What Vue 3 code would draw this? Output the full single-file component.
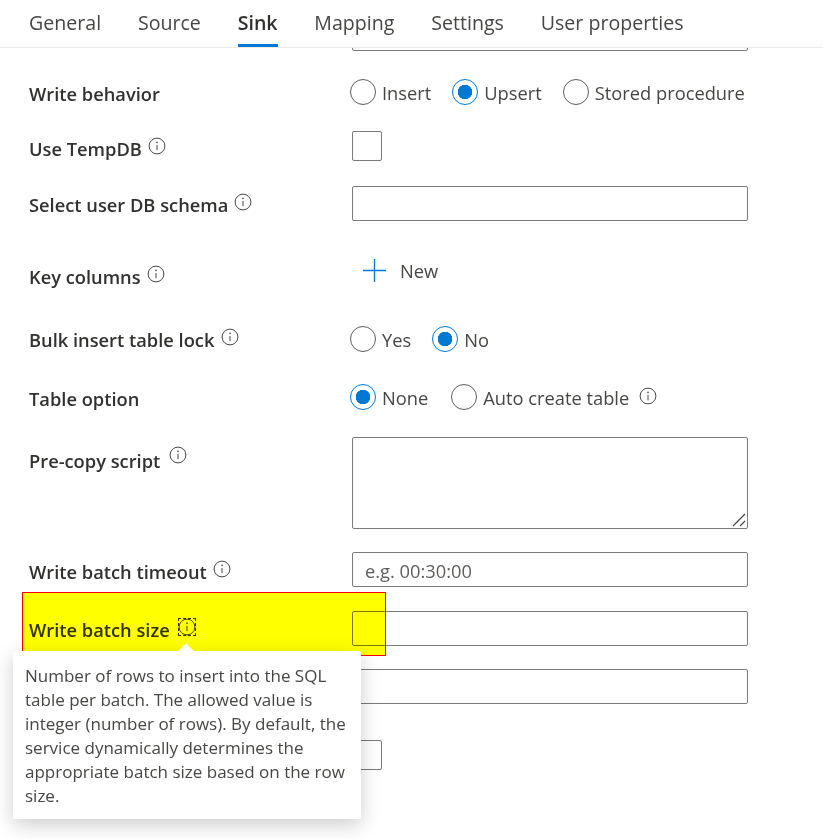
<template>
  <div class="page">
    <nav class="tabs">
      <a v-for="tab in tabs" :key="tab" class="tab" :class="{ 'tab--active': tab === 'Sink' }">{{ tab }}</a>
    </nav>

    <div class="form">
      <div class="clipped-field"><input class="text-input" type="text"></div>

      <div class="row row-behavior">
        <div class="label label-behavior">Write behavior</div>
        <div class="radios">
          <label v-for="o in behaviorOptions" :key="o" class="radio">
            <input v-model="behavior" type="radio" name="behavior" :value="o"><span>{{ o }}</span>
          </label>
        </div>
      </div>

      <div class="row row-tempdb">
        <div class="label label-tempdb">Use TempDB <svg class="info" viewBox="0 0 18 18"><circle cx="9" cy="9" r="7.9" /><path d="M9 8v5.2" /><circle class="dot" cx="9" cy="5.4" r=".8" /></svg></div>
        <input class="checkbox" type="checkbox">
      </div>

      <div class="row row-schema">
        <div class="label label-schema">Select user DB schema <svg class="info" viewBox="0 0 18 18"><circle cx="9" cy="9" r="7.9" /><path d="M9 8v5.2" /><circle class="dot" cx="9" cy="5.4" r=".8" /></svg></div>
        <input class="text-input" type="text">
      </div>

      <div class="row row-key">
        <div class="label label-key">Key columns <svg class="info" viewBox="0 0 18 18"><circle cx="9" cy="9" r="7.9" /><path d="M9 8v5.2" /><circle class="dot" cx="9" cy="5.4" r=".8" /></svg></div>
        <button class="add-btn" type="button">
          <svg class="plus" viewBox="0 0 24 24"><path d="M12 0v24M0 12h24" /></svg>
          New
        </button>
      </div>

      <div class="row row-bulk">
        <div class="label label-bulk">Bulk insert table lock <svg class="info" viewBox="0 0 18 18"><circle cx="9" cy="9" r="7.9" /><path d="M9 8v5.2" /><circle class="dot" cx="9" cy="5.4" r=".8" /></svg></div>
        <div class="radios">
          <label v-for="o in ['Yes', 'No']" :key="o" class="radio">
            <input v-model="bulkLock" type="radio" name="bulk" :value="o"><span>{{ o }}</span>
          </label>
        </div>
      </div>

      <div class="row row-table">
        <div class="label label-table">Table option</div>
        <div class="radios radios--table">
          <label class="radio"><input v-model="tableOption" type="radio" name="table" value="None"><span>None</span></label>
          <label class="radio"><input v-model="tableOption" type="radio" name="table" value="Auto"><span>Auto create table</span></label>
          <svg class="info info--after" viewBox="0 0 18 18"><circle cx="9" cy="9" r="7.9" /><path d="M9 8v5.2" /><circle class="dot" cx="9" cy="5.4" r=".8" /></svg>
        </div>
      </div>

      <div class="row row-script">
        <div class="label label-script">Pre-copy script <svg class="info" viewBox="0 0 18 18"><circle cx="9" cy="9" r="7.9" /><path d="M9 8v5.2" /><circle class="dot" cx="9" cy="5.4" r=".8" /></svg></div>
        <div class="textarea-wrap">
          <textarea class="textarea"></textarea>
          <svg class="grip" viewBox="0 0 14 14"><path d="M1 13 13 1M8 13l5-5" /></svg>
        </div>
      </div>

      <div class="row row-timeout">
        <div class="label label-timeout">Write batch timeout <svg class="info" viewBox="0 0 18 18"><circle cx="9" cy="9" r="7.9" /><path d="M9 8v5.2" /><circle class="dot" cx="9" cy="5.4" r=".8" /></svg></div>
        <input class="text-input" type="text" placeholder="e.g. 00:30:00">
      </div>

      <div class="row row-size">
        <div class="label label-size">Write batch size <span class="focus-ring"><svg class="info" viewBox="0 0 18 18"><circle cx="9" cy="9" r="7.9" /><path d="M9 8v5.2" /><circle class="dot" cx="9" cy="5.4" r=".8" /></svg></span></div>
        <input class="text-input" type="text">
      </div>

      <div class="row row-next">
        <div class="label"></div>
        <input class="text-input" type="text">
      </div>

      <div class="row row-last">
        <div class="label"></div>
        <input class="checkbox" type="checkbox">
      </div>
    </div>

    <div class="highlight"></div>

    <div class="tooltip">
      <span class="tooltip__arrow"></span>
      Number of rows to insert into the SQL table per batch. The allowed value is integer (number of rows). By default, the service dynamically determines the appropriate batch size based on the row size.
    </div>
  </div>
</template>

<script setup>
import { ref } from 'vue'

const tabs = ['General', 'Source', 'Sink', 'Mapping', 'Settings', 'User properties']
const behaviorOptions = ['Insert', 'Upsert', 'Stored procedure']

const behavior = ref('Upsert')
const bulkLock = ref('No')
const tableOption = ref('None')
</script>

<style>
html, body {
  margin: 0;
  background: #fff;
}
</style>

<style scoped>
.page {
  position: relative;
  width: 823px;
  height: 839px;
  overflow: hidden;
  font-family: "Open Sans", "Noto Sans", sans-serif;
  color: #323130;
  font-size: 18.3px;
}

.tabs {
  display: flex;
  gap: 36.8px;
  height: 47px;
  padding-left: 29px;
  border-bottom: 1px solid #edebe9;
  font-size: 19.6px;
}

.tab {
  height: 47px;
  line-height: 46px;
  box-sizing: border-box;
  color: #484644;
}

.tab--active {
  font-weight: 600;
  color: #323130;
  border-bottom: 3px solid #0078d4;
}

.form {
  display: flex;
  flex-direction: column;
  padding-left: 29px;
}

.clipped-field {
  width: 396px;
  height: 3px;
  margin-left: 323px;
  overflow: hidden;
  display: flex;
  align-items: flex-end;
}

.row {
  display: grid;
  grid-template-columns: 323px 396px;
  grid-template-rows: minmax(0, 1fr);
  align-items: center;
}

.row-behavior { margin-top: 28px; height: 26px; }
.row-tempdb { margin-top: 26px; height: 30px; }
.row-schema { margin-top: 25px; height: 35px; }
.row-key { margin-top: 34px; height: 30px; }
.row-bulk { margin-top: 41px; height: 26px; }
.row-table { margin-top: 32px; height: 26px; }
.row-script { margin-top: 27px; height: 92px; align-items: flex-start; }
.row-timeout { margin-top: 23px; height: 35px; }
.row-size { margin-top: 24px; height: 35px; }
.row-next { margin-top: 23px; height: 35px; }
.row-last { margin-top: 36px; height: 30px; }

.label {
  display: flex;
  align-items: center;
  gap: 6px;
  font-weight: 600;
  white-space: nowrap;
  line-height: 26px;
}

.label-behavior { padding-top: 4px; }
.label-tempdb { padding-top: 6px; }
.label-schema { padding-top: 3px; }
.label-key { padding-top: 14px; }
.label-bulk { padding-top: 2px; }
.label-table { padding-top: 4px; }
.label-script { padding-top: 11px; }
.label-timeout { padding-top: 5px; }
.label-size { padding-top: 3px; }

.info {
  width: 18px;
  height: 18px;
  margin-top: -7px;
  flex: none;
  fill: none;
  stroke: #484644;
  stroke-width: 1;
}

.info .dot {
  fill: #484644;
  stroke: none;
}

.label-script .info {
  margin: -13px 0 0 3px;
}

.label-bulk .info {
  margin-left: 1px;
}

.info--after {
  margin: -3px 0 0 -13px;
}

.focus-ring {
  display: inline-flex;
  margin: -7px 0 0 2px;
  outline: 1px dashed #323130;
  outline-offset: -1px;
}

.focus-ring .info {
  margin-top: 0;
}

.radios {
  display: flex;
  align-items: center;
  gap: 21px;
  margin-left: -2px;
}

.radios--table {
  gap: 23px;
}

.radio {
  display: flex;
  align-items: center;
  gap: 6px;
  color: #484644;
  white-space: nowrap;
}

.radio input {
  appearance: none;
  width: 26px;
  height: 26px;
  margin: 0;
  flex: none;
  border: 1px solid #605e5c;
  border-radius: 50%;
  background: #fff;
}

.radio input:checked {
  border-color: #0078d4;
  background: radial-gradient(circle, #0078d4 0 7px, #fff 7.5px);
}

.checkbox {
  appearance: none;
  width: 30px;
  height: 30px;
  margin: 0;
  border: 1px solid #7a7a7a;
  border-radius: 2px;
  background: #fff;
}

.text-input,
.textarea {
  display: block;
  width: 396px;
  height: 35px;
  margin: 0;
  padding: 1px 12px 0;
  box-sizing: border-box;
  border: 1px solid #7a7a7a;
  border-radius: 2px;
  background: #fff;
  font: inherit;
  color: #323130;
  flex: none;
  outline: none;
}

.text-input::placeholder {
  color: #605e5c;
  opacity: 1;
}

.textarea-wrap {
  position: relative;
  width: 396px;
  height: 92px;
}

.textarea {
  height: 92px;
  resize: none;
}

.grip {
  position: absolute;
  right: 2px;
  bottom: 2px;
  width: 14px;
  height: 14px;
  fill: none;
  stroke: #484644;
  stroke-width: 1.2;
}

.add-btn {
  display: flex;
  align-items: center;
  gap: 14px;
  width: max-content;
  padding: 0 0 0 11px;
  border: 0;
  background: none;
  font: inherit;
  color: #484644;
  height: 30px;
}

.plus {
  width: 23px;
  height: 23px;
  fill: none;
  stroke: #0078d4;
  stroke-width: 1.4;
}

.highlight {
  position: absolute;
  left: 22px;
  top: 592px;
  width: 362px;
  height: 62px;
  border: 1px solid #f00;
  background: #ff0;
  mix-blend-mode: multiply;
}

.tooltip {
  position: absolute;
  left: 13px;
  top: 651px;
  width: 348px;
  height: 168px;
  box-sizing: border-box;
  padding: 13px 12px;
  border-radius: 2px;
  background: #fff;
  box-shadow: 0 6px 20px rgba(0, 0, 0, .2);
  font-size: 17px;
  line-height: 24px;
  color: #484644;
}

.tooltip__arrow {
  position: absolute;
  left: 164px;
  top: -4px;
  width: 18px;
  height: 18px;
  background: #fff;
  transform: rotate(45deg);
}
</style>
